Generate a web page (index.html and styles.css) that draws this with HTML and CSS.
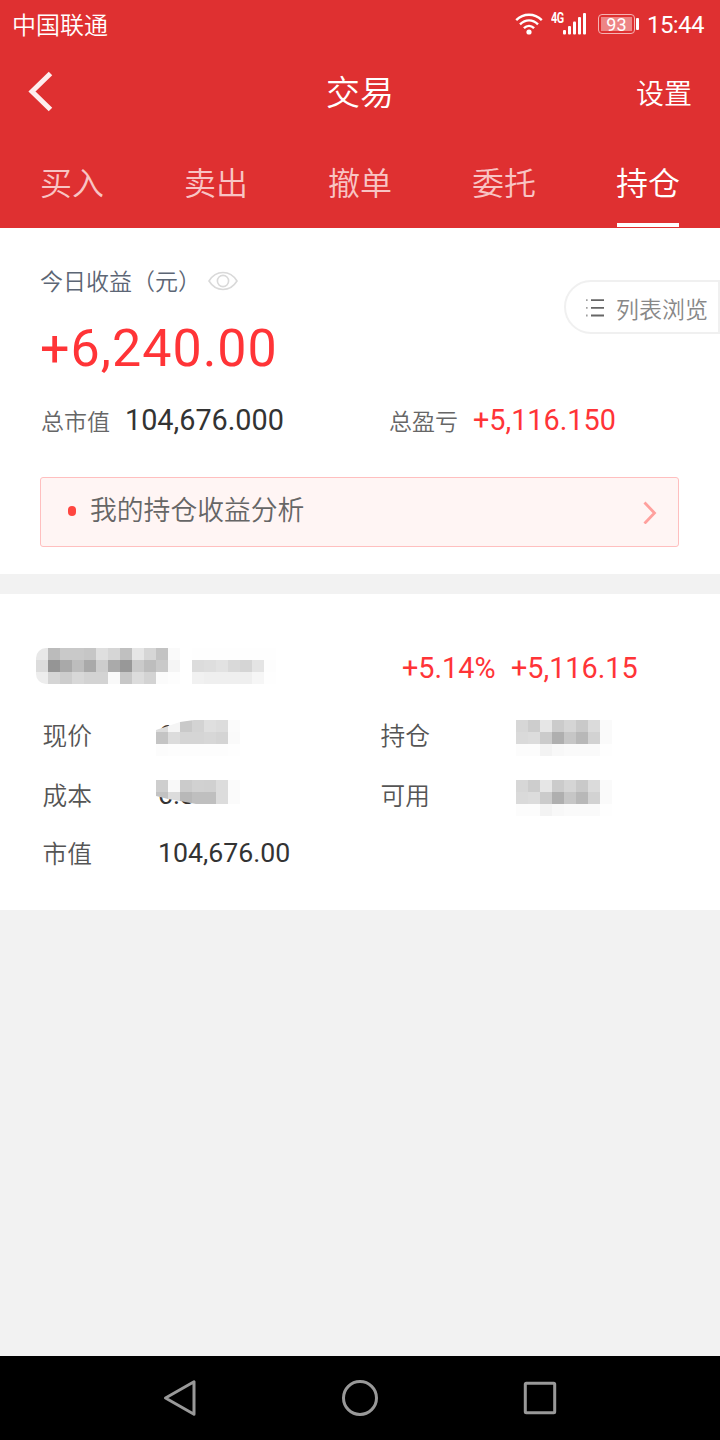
FILE: index.html
```html
<!DOCTYPE html>
<html lang="zh-CN">
<head>
  <meta charset="UTF-8" />
  <meta name="viewport" content="width=device-width, initial-scale=1.0"/>
  <title>交易 - 持仓</title>
  <link rel="stylesheet" href="styles.css">
</head>
<body>

<div class="screen">
  <header class="header">
    <div class="status-bar">
      <span class="carrier">中国联通</span>
      <div class="status-icons">
        <svg class="wifi" width="28" height="24" viewBox="0 0 28 24" fill="none" stroke="#fff" stroke-width="2.4">
          <path d="M1.2 8.2C8.5 1 19.5 1 26.8 8.2"/>
          <path d="M5 12.3C10.5 7 17.5 7 23 12.3"/>
          <path d="M8.9 16.2C12 13.2 16 13.2 19.1 16.2"/>
          <circle cx="14" cy="20" r="2.6" fill="#fff" stroke="none"/>
        </svg>
        <span class="network">4G</span>
        <svg class="signal" width="24" height="24" viewBox="0 0 24 24" fill="#fff">
          <rect x="0" y="18" width="3" height="4.5" rx="1"/>
          <rect x="5" y="14" width="3" height="8.5" rx="1"/>
          <rect x="10" y="9.5" width="3" height="13" rx="1"/>
          <rect x="15" y="5" width="3" height="17.5" rx="1"/>
          <rect x="20" y="1" width="3" height="21.5" rx="1"/>
        </svg>
        <div class="battery"><span>93</span></div>
        <div class="battery-tip"></div>
        <span class="time">15:44</span>
      </div>
    </div>

    <div class="title-bar">
      <svg class="back" width="26" height="42" viewBox="0 0 26 42" fill="none" stroke="#fdeeee" stroke-width="5">
        <path d="M22.5 2.5L4 20.5L22.5 38.5"/>
      </svg>
      <h1>交易</h1>
      <span class="settings">设置</span>
    </div>

    <nav class="tabs">
      <a class="tab">买入</a>
      <a class="tab">卖出</a>
      <a class="tab">撤单</a>
      <a class="tab">委托</a>
      <a class="tab active">持仓</a>
    </nav>
  </header>

  <section class="summary">
    <div class="today-label">
      <span>今日收益（元）</span>
      <svg class="eye" width="30" height="20" viewBox="0 0 30 20" fill="none" stroke="#d9d9d9" stroke-width="1.6">
        <path d="M1 10C8 -1.3 22 -1.3 29 10C22 21.3 8 21.3 1 10Z"/>
        <circle cx="15" cy="10" r="5.6"/>
      </svg>
    </div>
    <div class="today-value">+6,240.00</div>
    <div class="totals">
      <div class="total"><span class="total-label">总市值</span><span class="total-value">104,676.000</span></div>
      <div class="total"><span class="total-label">总盈亏</span><span class="total-value up">+5,116.150</span></div>
    </div>
    <div class="analysis">
      <i class="dot"></i>
      <span>我的持仓收益分析</span>
      <svg class="arrow" width="14" height="24" viewBox="0 0 14 24" fill="none" stroke="#ffa09d" stroke-width="2.8">
        <path d="M1.5 2.5L11.5 13L1.5 23.5"/>
      </svg>
    </div>

    <div class="list-view">
      <svg width="18" height="18" viewBox="0 0 18 18" stroke="#666" stroke-width="1.8">
        <path d="M5 1.2H18M5 8.8H18M5 16.5H18"/>
        <path d="M0.2 1.2H1.5M0.2 8.8H1.5M0.2 16.5H1.5" stroke="#888"/>
      </svg>
      <span>列表浏览</span>
    </div>
  </section>

  <section class="holding">
    <div class="holding-head">
      <div class="holding-name">
        <svg class="mosaic" id="stockName" width="144" height="36"></svg>
        <svg class="mosaic" id="stockCode" width="84" height="36"></svg>
      </div>
      <span class="rate">+5.14%</span>
      <span class="profit">+5,116.15</span>
    </div>
    <div class="holding-grid">
      <span class="label">现价</span>
      <div class="value">6<svg class="mosaic cover" id="price" width="84" height="36"></svg></div>
      <span class="label">持仓</span>
      <div class="value"><svg class="mosaic cover" id="amount" width="96" height="36"></svg></div>

      <span class="label">成本</span>
      <div class="value">6.8<svg class="mosaic cover" id="cost" width="84" height="24"></svg></div>
      <span class="label">可用</span>
      <div class="value"><svg class="mosaic cover" id="available" width="96" height="36"></svg></div>

      <span class="label last">市值</span>
      <div class="value last">104,676.00</div>
    </div>
  </section>

  <footer class="nav-bar">
    <svg width="40" height="40" viewBox="0 0 40 40"><path d="M5.5 20L34 3.8V36.2Z"/></svg>
    <svg width="40" height="40" viewBox="0 0 40 40"><circle cx="20" cy="20" r="16.5"/></svg>
    <svg width="40" height="40" viewBox="0 0 40 40"><rect x="5.3" y="5.3" width="29.4" height="29.4" rx="1"/></svg>
  </footer>
</div>

<script>
  // grey levels of the masked fields, one string per row, 12px cells
  const shares = [
    "d7 cd e6 cb d5 c9 db fa",
    "da dc cb af c6 b8 d2 fa",
    "fc fc f3 f8 fa fa fa fe"
  ];

  const masks = {
    stockName: [
      "e8 bb c9 c9 c6 df d6 c0 e6 d6 c3 fa",
      "dc 95 a9 bd a9 cd aa 98 ca bd c9 f5",
      "ed d5 cd d8 d3 d3 f9 c7 dc d3 fb fd"
    ],
    stockCode: [
      "fe fe fe fe fe fe fe",
      "dc de e2 d9 d5 e4 fd",
      "f1 ef ef ef ef f6 fe"
    ],
    price: [
      "dc f5 c9 d3 df dc fb",
      "c4 dc d5 d5 d7 d4 fa",
      "fc fd fd fd fd fd fe"
    ],
    cost: [
      "ce f9 cb d1 d0 dc fb",
      "c2 dc b8 bf bf dc fb"
    ],
    amount: shares,
    available: shares
  };

  for (const id in masks) {
    let cells = "";
    masks[id].forEach((row, y) => {
      row.split(" ").forEach((c, x) => {
        cells += `<rect x="${x * 12}" y="${y * 12}" width="12" height="12" fill="#${c}${c}${c}"/>`;
      });
    });
    document.getElementById(id).innerHTML = cells;
  }
</script>

</body>
</html>
```

FILE: styles.css
```css
* {
  box-sizing: border-box;
}
body {
  margin: 0;
  font-family: Roboto, "Noto Sans CJK SC", sans-serif;
  background: #f2f2f2;
}
svg {
  display: block;
  flex: none;
}
.screen {
  width: 720px;
  height: 1440px;
  display: flex;
  flex-direction: column;
  overflow: hidden;
}

/* header */
.header {
  height: 228px;
  background: #df3031;
  color: #fff;
}
.status-bar {
  height: 48px;
  padding: 0 16px 0 12px;
  display: flex;
  align-items: center;
  justify-content: space-between;
}
.carrier {
  padding-bottom: 2px;
  font-size: 24px;
  font-weight: 350;
}
.status-icons {
  display: flex;
  align-items: center;
}
.network {
  align-self: flex-start;
  width: 12px;
  margin: 0 0 0 8px;
  font-size: 15px;
  font-weight: 700;
  line-height: 18px;
  letter-spacing: -0.5px;
  transform: scaleX(0.72);
  transform-origin: left;
}
.battery {
  width: 37px;
  height: 20px;
  margin-left: 11px;
  padding: 2px;
  border: 1.5px solid #f5b3b3;
  border-radius: 4px;
}
.battery span {
  display: block;
  height: 14px;
  background: #ed8585;
  font-size: 18px;
  line-height: 16px;
  text-align: center;
}
.battery-tip {
  width: 3px;
  height: 12px;
  margin-left: 1px;
  border-radius: 1px;
  background: #fff;
}
.time {
  margin-left: 8px;
  padding-top: 2px;
  font-size: 24px;
  letter-spacing: -0.55px;
}
.title-bar {
  height: 88px;
  padding: 0 28px;
  display: grid;
  grid-template-columns: 1fr auto 1fr;
  align-items: center;
}
h1 {
  margin: 0;
  padding-bottom: 3px;
  font-size: 34px;
  font-weight: 350;
}
.settings {
  padding-bottom: 1px;
  font-size: 28px;
  font-weight: 350;
  text-align: right;
}
.tabs {
  height: 92px;
  display: flex;
}
.tab {
  flex: 1;
  display: flex;
  flex-direction: column;
  align-items: center;
  padding-top: 24px;
  font-size: 32px;
  line-height: 48px;
  color: #f8c4c4;
  font-weight: 350;
}
.tab.active {
  color: #fff;
}
.tab.active::after {
  content: "";
  width: 62px;
  height: 4px;
  margin-top: 15px;
  background: #fff;
}

/* profit summary */
.summary {
  position: relative;
  height: 346px;
  padding: 36px 41px 0 40px;
  background: #fff;
}
.today-label {
  height: 34px;
  display: flex;
  align-items: center;
  font-size: 23px;
  font-weight: 350;
  color: #5c6675;
}
.today-label span {
  padding-bottom: 2px;
}
.eye {
  margin-left: 7px;
}
.today-value {
  height: 100px;
  font-size: 52px;
  line-height: 101px;
  letter-spacing: 1px;
  color: #ff3437;
}
.totals {
  display: grid;
  grid-template-columns: 348px 1fr;
  height: 44px;
  align-items: center;
}
.total {
  display: flex;
  align-items: baseline;
  gap: 15px;
  padding-left: 1px;
}
.total-label {
  font-size: 23px;
  font-weight: 350;
  color: #666;
}
.total-value {
  font-size: 28.8px;
  color: #333;
}
.total-value.up {
  color: #ff3437;
}
.analysis {
  height: 70px;
  margin-top: 35px;
  padding: 0 21px 0 27px;
  display: flex;
  align-items: center;
  border: 1px solid #ffbfbf;
  border-radius: 3px;
  background: #fff5f4;
  font-size: 26.8px;
  font-weight: 350;
  color: #666;
}
.analysis span {
  margin-left: 14px;
  padding-bottom: 7px;
}
.dot {
  width: 8px;
  height: 10px;
  margin-bottom: 2px;
  border-radius: 4px;
  background: #ff4640;
}
.arrow {
  margin-left: auto;
}
.list-view {
  position: absolute;
  top: 52px;
  right: 0;
  width: 156px;
  height: 54px;
  padding: 2px 0 0 20px;
  display: flex;
  align-items: center;
  gap: 12px;
  border: 2px solid #f0f0f0;
  border-radius: 27px 0 0 27px;
  font-size: 23px;
  font-weight: 350;
  color: #888;
  white-space: nowrap;
}

/* holding card */
.holding {
  height: 316px;
  margin-top: 20px;
  padding: 54px 0 0 36px;
  background: #fff;
}
.holding-head {
  height: 54px;
  display: flex;
  font-size: 28.8px;
  line-height: 40px;
  color: #ff3437;
}
.holding-name {
  width: 366px;
  display: flex;
  gap: 12px;
}
.rate {
  width: 109px;
}
.mosaic {
  shape-rendering: crispEdges;
}
#stockName {
  border-radius: 10px 0 0 10px;
}
.holding-grid {
  display: grid;
  grid-template-columns: 122px 216px 142px 1fr;
  grid-template-rows: 60px 60px 56px;
  padding-left: 6px;
}
.label {
  padding-left: 0.5px;
  font-size: 24.7px;
  font-weight: 350;
  line-height: 69px;
  color: #555;
}
.label.last {
  line-height: 66px;
}
.value {
  position: relative;
  margin-left: -6px;
  font-size: 26.7px;
  line-height: 67px;
  color: #333;
}
.value.last {
  line-height: 62px;
}
.cover {
  position: absolute;
  left: -2px;
  top: 18px;
}
#amount,
#available {
  left: 0;
}
#price {
  clip-path: polygon(0 10px, 12px 6px, 24px 2px, 38px 0, 100% 0, 100% 100%, 0 100%);
}
#cost {
  clip-path: polygon(0 0, 100% 0, 100% 100%, 40px 100%, 24px 21px, 12px 19px, 0 16px);
}

/* system navigation */
.nav-bar {
  height: 84px;
  margin-top: auto;
  padding: 0 160px;
  display: flex;
  align-items: center;
  justify-content: space-between;
  background: #000;
}
.nav-bar svg {
  fill: none;
  stroke: #999;
  stroke-width: 3;
  stroke-linejoin: round;
}
```
